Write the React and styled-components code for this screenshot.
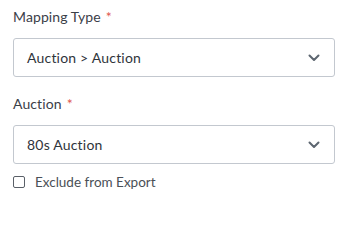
import React, { useState } from 'react'
import styled, { createGlobalStyle } from 'styled-components'

const GlobalStyle = createGlobalStyle`
  body {
    margin: 0;
    background: #ffffff;
    font-family: Lato, "Open Sans", "Liberation Sans", sans-serif;
  }
`

const Form = styled.div`
  width: 346px;
  padding: 9px 11px 0 13px;
  box-sizing: border-box;
`

const Field = styled.div`
  display: flex;
  flex-direction: column;
  margin-bottom: ${(p) => p.gap || 0}px;
`

const Label = styled.label`
  font-size: 14px;
  line-height: 16px;
  color: #3b4048;
  margin-bottom: 13px;
  letter-spacing: 0.1px;
`

const Required = styled.span`
  color: #e0574f;
  margin-left: 5px;
`

const SelectBox = styled.div`
  height: 39px;
  box-sizing: border-box;
  border: 1px solid #c3c8cf;
  border-radius: 3px;
  display: flex;
  align-items: center;
  justify-content: space-between;
  padding: 0 14px 0 13px;
  font-size: 14px;
  letter-spacing: 0.2px;
  color: #2f343b;
`

const Chevron = () => (
  <svg width="12" height="8" viewBox="0 0 12 8">
    <path d="M1.5 1.5 L6 6 L10.5 1.5" fill="none" stroke="#5d6670" strokeWidth="2" strokeLinecap="round" strokeLinejoin="round" />
  </svg>
)

const CheckRow = styled.label`
  display: flex;
  align-items: center;
  gap: 10px;
  margin-top: 10px;
  font-size: 13.5px;
  color: #4a4f56;
`

const Box = styled.span`
  width: 12px;
  height: 12px;
  box-sizing: border-box;
  border: 1px solid #5a6068;
  border-radius: 2px;
  background: ${(p) => (p.checked ? '#5a6068' : '#fff')};
`

export default function App() {
  const [exclude, setExclude] = useState(false)
  return (
    <>
      <GlobalStyle />
      <Form>
        <Field gap={19}>
          <Label>
            Mapping Type<Required>*</Required>
          </Label>
          <SelectBox>
            <span>Auction &gt; Auction</span>
            <Chevron />
          </SelectBox>
        </Field>
        <Field>
          <Label>
            Auction<Required>*</Required>
          </Label>
          <SelectBox>
            <span>80s Auction</span>
            <Chevron />
          </SelectBox>
        </Field>
        <CheckRow onClick={() => setExclude(!exclude)}>
          <Box checked={exclude} />
          Exclude from Export
        </CheckRow>
      </Form>
    </>
  )
}
